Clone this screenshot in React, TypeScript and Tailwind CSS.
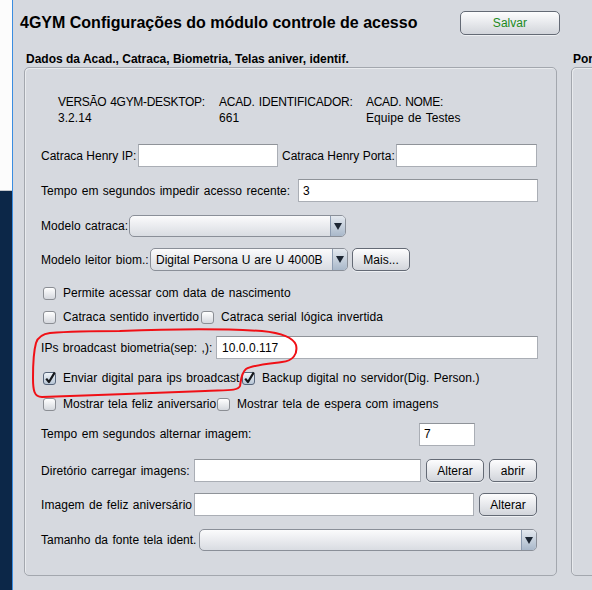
import React from "react";

type Cls = { className?: string };

function Field({ className = "", value }: Cls & { value?: string }) {
  return (
    <div
      className={`h-[23px] shrink-0 bg-white border border-[#aaaeb5] border-t-[#8f9399] flex items-center pl-[4px] whitespace-nowrap ${className}`}
    >
      {value}
    </div>
  );
}

function Arrow() {
  return (
    <svg width="8" height="7" viewBox="0 0 8 7">
      <polygon points="0,0 8,0 4,7" fill="#1c2633" />
    </svg>
  );
}

function Combo({ className = "", text }: Cls & { text?: string }) {
  return (
    <div
      className={`h-[22px] shrink-0 flex rounded-[5px] border border-[#8a8f98] bg-linear-to-b from-[#fbfbfc] to-[#d9dce2] overflow-hidden ${className}`}
    >
      <div className="flex-1 flex items-center pl-[5px] whitespace-nowrap overflow-hidden">{text}</div>
      <div className="w-[15px] shrink-0 flex items-center justify-center border-l border-[#8c9bb0] bg-linear-to-b from-[#e4e9ef] to-[#a9b8ca]">
        <Arrow />
      </div>
    </div>
  );
}

function Btn({ className = "", children }: Cls & { children: React.ReactNode }) {
  return (
    <div
      className={`shrink-0 flex items-center justify-center rounded-[5px] border border-[#646a75] bg-linear-to-b from-[#fdfdfe] to-[#d2d5db] shadow-[0_1px_0_#eef0f3] ${className}`}
    >
      {children}
    </div>
  );
}

function Check({ checked, label, className = "" }: Cls & { checked?: boolean; label: string }) {
  return (
    <div className={`flex items-center gap-[7px] whitespace-nowrap ${className}`}>
      <div
        className={`relative w-[13px] h-[13px] shrink-0 rounded-[3px] border ${
          checked
            ? "border-[#56647a] bg-linear-to-b from-[#f0f4f8] to-[#b7c5d5]"
            : "border-[#8b8e94] bg-linear-to-b from-white to-[#d5d8de]"
        }`}
      >
        {checked && (
          <svg className="absolute -left-[1px] -top-[3px]" width="15" height="15" viewBox="0 0 15 15">
            <path d="M3.2 8.6 L6 12 L11.8 2.4" fill="none" stroke="#16181c" strokeWidth="2.2" strokeLinejoin="round" />
          </svg>
        )}
      </div>
      <span>{label}</span>
    </div>
  );
}

export default function App() {
  return (
    <div className="relative w-[592px] h-[590px] overflow-hidden flex bg-[#d6d9df] font-['Liberation_Sans',Arial,sans-serif] text-[12px] leading-[16px] text-black tracking-[0.05px] [word-spacing:1px]">
      {/* janela de trás */}
      <div className="w-[12px] shrink-0 flex flex-col">
        <div className="h-[191px] bg-[#fcfcfc] border-b border-[#c6c9ce]"></div>
        <div className="flex-1 bg-[#0c2748]"></div>
      </div>
      <div className="w-[1px] shrink-0 bg-[#3a8de0]"></div>

      <div className="flex-1 flex flex-col min-w-0">
        {/* cabeçalho */}
        <div className="flex items-center justify-between h-[24px] mt-[11px] pl-[7px] pr-[32px]">
          <h1 className="text-[16px] leading-[20px] font-bold whitespace-nowrap tracking-normal [word-spacing:0px]">
            4GYM Configurações do módulo controle de acesso
          </h1>
          <Btn className="w-[100px] h-[24px] text-[#1c8a1c]">Salvar</Btn>
        </div>

        <div className="flex gap-[14px] mt-[16px] pl-[11px]">
          {/* painel principal */}
          <div className="w-[533px] shrink-0 flex flex-col">
            <div className="h-[16px] pl-[2px] font-bold whitespace-nowrap tracking-normal [word-spacing:0px]">
              Dados da Acad., Catraca, Biometria, Telas aniver, identif.
            </div>
            <div className="h-[509px] rounded-[5px] border border-[#a3a7ae] shadow-[inset_1px_1px_0_#e9ebee] pl-[16px] flex flex-col">
              <div className="mt-[26px] pl-[17px] flex whitespace-nowrap">
                <div className="w-[161px]">
                  <div className="tracking-[-0.3px]">VERSÃO 4GYM-DESKTOP:</div>
                  <div>3.2.14</div>
                </div>
                <div className="w-[147px]">
                  <div className="tracking-[-0.2px]">ACAD. IDENTIFICADOR:</div>
                  <div>661</div>
                </div>
                <div>
                  <div className="tracking-[-0.3px]">ACAD. NOME:</div>
                  <div>Equipe de Testes</div>
                </div>
              </div>

              <div className="mt-[18px] h-[23px] flex items-center whitespace-nowrap">
                <span className="w-[97px] shrink-0 tracking-normal [word-spacing:0px]">Catraca Henry IP:</span>
                <Field className="w-[140px]" />
                <span className="w-[118px] shrink-0 pl-[4px] tracking-normal [word-spacing:0px]">Catraca Henry Porta:</span>
                <Field className="w-[141px]" />
              </div>

              <div className="mt-[12px] h-[23px] flex items-center whitespace-nowrap">
                <span className="w-[257px] shrink-0">Tempo em segundos impedir acesso recente:</span>
                <Field className="w-[240px]" value="3" />
              </div>

              <div className="mt-[13px] h-[22px] flex items-center whitespace-nowrap">
                <span className="w-[88px] shrink-0">Modelo catraca:</span>
                <Combo className="w-[217px]" />
              </div>

              <div className="mt-[11px] h-[23px] flex items-center whitespace-nowrap">
                <span className="w-[109px] shrink-0">Modelo leitor biom.:</span>
                <Combo className="w-[198px] h-[23px] tracking-normal [word-spacing:0.5px]" text="Digital Persona U are U 4000B" />
                <Btn className="ml-[4px] w-[58px] h-[23px]">Mais...</Btn>
              </div>

              <div className="mt-[12px] h-[20px] flex items-center pl-[2px]">
                <Check label="Permite acessar com data de nascimento" />
              </div>

              <div className="mt-[4px] h-[20px] flex items-center pl-[2px]">
                <Check className="w-[158px] shrink-0" label="Catraca sentido invertido" />
                <Check label="Catraca serial lógica invertida" />
              </div>

              <div className="mt-[9px] h-[23px] flex items-center whitespace-nowrap">
                <span className="w-[175px] shrink-0">IPs broadcast biometria(sep: ,):</span>
                <Field className="w-[322px] pl-[5px]" value="10.0.0.117" />
              </div>

              <div className="mt-[9px] h-[20px] flex items-center pl-[2px]">
                <Check checked className="w-[199px] shrink-0" label="Enviar digital para ips broadcast" />
                <Check checked label="Backup digital no servidor(Dig. Person.)" />
              </div>

              <div className="mt-[6px] h-[20px] flex items-center pl-[2px]">
                <Check className="w-[174px] shrink-0 tracking-normal" label="Mostrar tela feliz aniversario" />
                <Check label="Mostrar tela de espera com imagens" />
              </div>

              <div className="mt-[9px] h-[22px] flex items-center whitespace-nowrap">
                <span className="w-[378px] shrink-0">Tempo em segundos alternar imagem:</span>
                <Field className="w-[56px] h-[22px]" value="7" />
              </div>

              <div className="mt-[14px] h-[23px] flex items-center whitespace-nowrap">
                <span className="w-[153px] shrink-0">Diretório carregar imagens:</span>
                <Field className="w-[227px]" />
                <Btn className="ml-[5px] w-[58px] h-[23px]">Alterar</Btn>
                <Btn className="ml-[5px] w-[48px] h-[23px]">abrir</Btn>
              </div>

              <div className="mt-[11px] h-[23px] flex items-center whitespace-nowrap">
                <span className="w-[153px] shrink-0">Imagem de feliz aniversário</span>
                <Field className="w-[280px]" />
                <Btn className="ml-[5px] w-[58px] h-[23px]">Alterar</Btn>
              </div>

              <div className="mt-[13px] h-[22px] flex items-center whitespace-nowrap">
                <span className="w-[158px] shrink-0 tracking-normal">Tamanho da fonte tela ident.</span>
                <Combo className="w-[338px]" />
              </div>
            </div>
          </div>

          {/* painel da direita (cortado) */}
          <div className="w-[120px] shrink-0 flex flex-col">
            <div className="h-[16px] pl-[2px] font-bold whitespace-nowrap tracking-normal">Portas</div>
            <div className="h-[509px] rounded-[5px] border border-[#a3a7ae] shadow-[inset_1px_1px_0_#e9ebee]"></div>
          </div>
        </div>
      </div>

      {/* marcação à mão em vermelho */}
      <svg className="absolute inset-0 pointer-events-none" width="592" height="590" viewBox="0 0 592 590">
        <path
          d="M120 331 C170 329 230 329 262 331 C282 333 293 337 296 345 C298 354 293 361 282 362 C266 364 252 365 246 369 C241 373 241 381 240 386 C238 391 228 390 205 391 C160 393 90 395 42 397 C34 397 33 390 33 378 C33 362 34 350 36 343 C38 337 42 334 50 333 C75 331 100 331 120 331"
          fill="none"
          stroke="#f01016"
          strokeWidth="2"
          strokeLinecap="round"
        />
      </svg>
    </div>
  );
}
